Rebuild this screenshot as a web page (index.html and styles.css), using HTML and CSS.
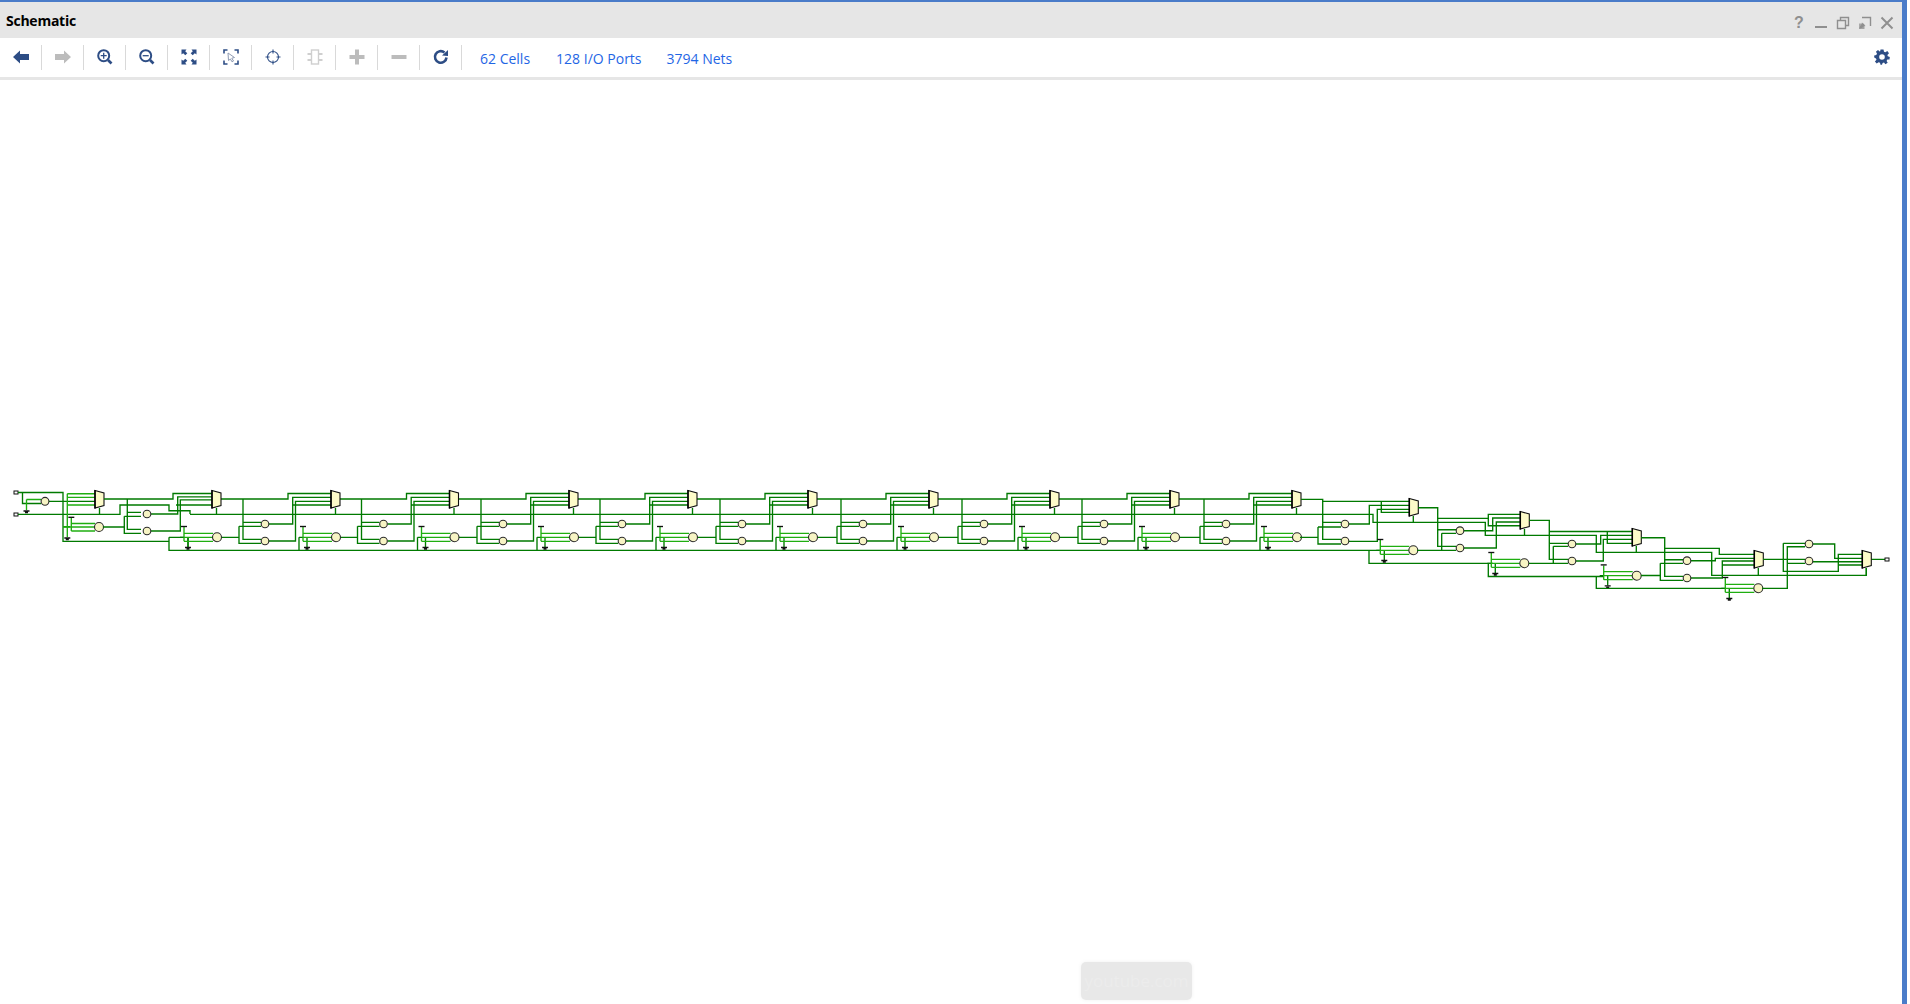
FILE: index.html
```html
<!DOCTYPE html>
<html lang="en">
<head>
<meta charset="utf-8">
<title>Schematic</title>
<link rel="stylesheet" href="styles.css">
</head>
<body>
<div class="frame">
  <header class="titlebar">
    <span class="title">Schematic</span>
    <div class="winctl">
      <span class="qmark">?</span>
      <svg class="wicon" viewBox="0 0 14 14"><path d="M1 11H13" class="ws"/></svg>
      <svg class="wicon" viewBox="0 0 14 14"><path d="M1.500 4.500H9.500V12.500H1.500ZM4.500 4V1.500H12.500V9.500H10" class="wt"/></svg>
      <svg class="wicon" viewBox="0 0 14 14"><path d="M4 1.500H12.500V10M1.500 12.500L6 8M2 7.500V12H6.500" class="wt"/><path d="M1 13L4 6.500L7.500 10Z" class="wf"/></svg>
      <svg class="wicon" viewBox="0 0 14 14"><path d="M1.500 1.500L12.500 12.500M12.500 1.500L1.500 12.500" class="ws"/></svg>
    </div>
  </header>
  <nav class="toolbar">
    <span class="tool"><svg viewBox="0 0 16 16"><path class="fd" d="M0 8L7 1.500V5H16V11H7V14.500Z"/></svg></span>
    <span class="tool"><svg viewBox="0 0 16 16"><path class="fg" d="M16 8L9 1.500V5H0V11H9V14.500Z"/></svg></span>
    <span class="tool"><svg viewBox="0 0 16 16"><circle class="sd" cx="6.700" cy="6.700" r="5.500"/><path class="sd1" d="M6.700 3.700V9.700M3.700 6.700H9.700"/><path class="sd3" d="M11 11L14.500 14.500"/></svg></span>
    <span class="tool"><svg viewBox="0 0 16 16"><circle class="sd" cx="6.700" cy="6.700" r="5.500"/><path class="sd1" d="M3.700 6.700H9.700"/><path class="sd3" d="M11 11L14.500 14.500"/></svg></span>
    <span class="tool"><svg viewBox="0 0 16 16"><path class="fd" d="M0.500 0.500H5.500L4.200 2.200L6.300 4.300L4.300 6.300L2.200 4.200L0.500 5.500ZM15.500 0.500V5.500L13.800 4.200L11.700 6.300L9.700 4.300L11.800 2.200L10.500 0.500ZM0.500 15.500V10.500L2.200 11.800L4.300 9.700L6.300 11.700L4.200 13.800L5.500 15.500ZM15.500 15.500H10.500L11.800 13.800L9.700 11.700L11.700 9.700L13.800 11.800L15.500 10.500Z"/></svg></span>
    <span class="tool"><svg viewBox="0 0 16 16"><path class="sd1b" d="M4.500 1H1V4.500M11.500 1H15V4.500M1 11.500V15H4.500M15 11.500V15H11.500"/><path class="cursor" d="M5 4L11.500 8.500L8.800 9.200L10.500 12L9 12.800L7.400 10L5.500 11.500Z"/></svg></span>
    <span class="tool"><svg viewBox="0 0 16 16"><circle class="sd1t" cx="8" cy="8" r="5.500"/><path class="sd1t" d="M8 0.500V4.500M8 11.500V15.500M0.500 8H4.500M11.500 8H15.500"/></svg></span>
    <span class="tool"><svg viewBox="0 0 16 16"><rect class="sgt" x="4.500" y="1" width="7" height="14"/><path class="sgb" d="M0.500 5H4M0.500 11H4M12 5H15.500M12 11H15.500"/></svg></span>
    <span class="tool"><svg viewBox="0 0 16 16"><path class="fg" d="M6 0.500H10V6H15.500V10H10V15.500H6V10H0.500V6H6Z"/></svg></span>
    <span class="tool"><svg viewBox="0 0 16 16"><path class="fg" d="M0.500 6H15.500V10H0.500Z"/></svg></span>
    <span class="tool"><svg viewBox="0 0 16 16"><path class="sd3" d="M13.500 8.500A5.800 5.800 0 1 1 11.500 3.500"/><path class="fd" d="M9 6.500L15 7V1Z"/></svg></span>
    <a class="stat stat-cells">62 Cells</a>
    <a class="stat stat-ports">128 I/O Ports</a>
    <a class="stat stat-nets">3794 Nets</a>
    <span class="gear"><svg viewBox="0 0 16 16"><path class="gearf" fill-rule="evenodd" d="M6.500 0.500H9.500L10 2.700L11.400 3.300L13.300 2.100L15 4.300L13.400 5.900L13.800 7.200L15.800 8L15.500 10.500L13.300 10.600L12.600 11.900L13.700 13.800L11.400 15.200L10 13.600L8.600 14L8 15.800H6.500L6 13.800L4.600 13.300L2.700 14.400L0.900 12.400L2.500 10.700L2 9.400L0.200 8.600V6.400L2.300 6L3 4.600L1.900 2.800L4 1.100L5.700 2.400L6.200 2.200ZM8 5.200A2.800 2.800 0 1 0 8 10.800A2.800 2.800 0 1 0 8 5.200Z"/></svg></span>
  </nav>
  <div class="rule"></div>
  <main class="canvas">
    <svg class="schem" viewBox="0 80 1902 924" width="1902" height="924">
      <defs>
        <g id="mux">
          <path class="muxb" d="M0 490.500L9 493V505.500L0 508Z"/>
          <path class="muxl" d="M0 490V508.500"/>
        </g>
        <path id="gnd" class="k" d="M-3 0H3M-1.500 1.500H1.500"/>
        <g id="head">
          <path class="w" d="M-114 499H-43V493.500H0M-88 499V539.300H-70M-88 522.300H-70M-114 537.300H-92M-92 526.300H-70M-92 526.300V543.300H-70"/>
          <path class="w" d="M-62 524H-38.300V497.300H0M-62 541H-35.500V501.300H0M-38.300 505H0M4.500 508V514M-32 550.300V537.300"/>
          <circle class="gate" cx="-66" cy="524" r="3.800"/>
          <circle class="gate" cx="-66" cy="541" r="3.800"/>
        </g>
        <g id="inv">
          <path class="w" d="M-32 537.300H-28M-24 537.300V547"/>
          <path class="l" d="M-28 527V541.300M-28 533.300H1M-28 537.300H1M-28 541.300H1"/>
          <path class="k" d="M-31 526.500H-25"/>
          <use href="#gnd" x="-24" y="547.500"/>
          <circle class="gate" cx="5" cy="537.300" r="4.500"/>
        </g>
      </defs>

      <!-- first cell -->
      <rect class="port" x="14" y="491" width="4" height="3"/>
      <rect class="port" x="14" y="513" width="4" height="3"/>
      <path class="w" d="M18 492.500H63V541.300H169M22.500 492.500V503.500H41M49 501.300H95M63 526.700H70M18 514.300H120V505H169V510.700H190V514M99.500 508V514.300"/>
      <path class="l" d="M26.500 499.500H41M26.500 499.500V510"/>
      <use href="#gnd" x="26.500" y="511"/>
      <circle class="gate" cx="45" cy="501.300" r="3.900"/>
      <path class="l" d="M67.300 493.700V537M67.300 493.700H95M67.300 497.300H95M67.300 505H95M71.300 518V531M71.300 523.500H95M63 527H95M71.300 531H95"/>
      <path class="k" d="M68.300 517.300H74.300"/>
      <use href="#gnd" x="67.300" y="538"/>
      <circle class="gate" cx="99" cy="527" r="4.500"/>
      <use href="#mux" x="95"/>

      <!-- second cell, fans out from the first mux -->
      <path class="w" d="M104 499H173V493.500H212M127.300 499V529.300H141M127.300 512.300H141M103 527H124.300M124.300 516.300H141M124.300 516.300V533.300H141"/>
      <path class="w" d="M151 514H177.700V496.800H212M151 531H180.300V499.800H212M176 505H212M216.500 508V514M169 537.300H184M188 537.300V547"/>
      <circle class="gate" cx="147" cy="514" r="3.800"/>
      <circle class="gate" cx="147" cy="531" r="3.800"/>

      <!-- carry rails -->
      <path class="w" d="M190 514.300H1373V522.300H1485.300V535.300H1596.300V552.300H1711.700V575.300H1866.300V568"/>
      <path class="w" d="M169 537.300V550.300H1381M1369 550.300V563.300H1488.300V576.500H1596.300V588.300H1726M1488.300 563.300H1493M1596.300 576.500H1604"/>

      <!-- repeated cells -->
      <use href="#head" x="331"/><use href="#head" x="449.500"/><use href="#head" x="569"/>
      <use href="#head" x="688"/><use href="#head" x="808"/><use href="#head" x="929"/>
      <use href="#head" x="1050"/><use href="#head" x="1170"/><use href="#head" x="1292"/>
      <use href="#inv" x="212"/><use href="#inv" x="331"/><use href="#inv" x="449.500"/>
      <use href="#inv" x="569"/><use href="#inv" x="688"/><use href="#inv" x="808"/>
      <use href="#inv" x="929"/><use href="#inv" x="1050"/><use href="#inv" x="1170"/><use href="#inv" x="1292"/>
      <use href="#mux" x="212"/><use href="#mux" x="331"/><use href="#mux" x="449.500"/>
      <use href="#mux" x="569"/><use href="#mux" x="688"/><use href="#mux" x="808"/>
      <use href="#mux" x="929"/><use href="#mux" x="1050"/><use href="#mux" x="1170"/><use href="#mux" x="1292"/>

      <!-- tapering tail, cell 11 -->
      <path class="w" d="M1301 499.300H1322.700V501.300H1409M1322.700 499.300V539.300H1341M1322.700 522.300H1341M1300 537.300H1318M1318 527V544H1341M1318 527H1341"/>
      <path class="w" d="M1349 524H1369.300V505.300H1409M1349 541.300H1377.300V509.300H1409M1381.300 501.300V512.300H1409M1413.300 516V522.300"/>
      <circle class="gate" cx="1345" cy="524" r="3.800"/><circle class="gate" cx="1345" cy="541" r="3.800"/>
      <use href="#inv" transform="translate(1408.300 13)"/>
      <use href="#mux" transform="translate(1409.300 8)"/>

      <!-- cell 12 -->
      <path class="w" d="M1418 507.700H1437.700V546.300H1456M1437.700 529.700H1456M1437.700 518.300H1488.300V514.300H1520M1488.300 514.300V525.700H1520M1417 550.300H1456M1441.700 533.300V550.300M1441.700 533.300H1456"/>
      <path class="w" d="M1464 530.700H1492.700V518H1520M1464 548H1496.300V522H1520M1524.500 529V535.300"/>
      <circle class="gate" cx="1460" cy="530.700" r="3.800"/><circle class="gate" cx="1460" cy="548" r="3.800"/>
      <use href="#inv" transform="translate(1519.300 26)"/>
      <use href="#mux" transform="translate(1520.300 21)"/>

      <!-- cell 13 -->
      <path class="w" d="M1529 520.300H1549.300V559.300H1568M1549.300 543.300H1568M1549.300 531.500H1632M1529 563.300H1568M1553.300 546.300V563.300M1553.300 546.300H1568"/>
      <path class="w" d="M1576 544H1600.700V535.300H1632M1576 561H1603.300V539.300H1632M1607.300 531.500V543.300H1632M1636.300 546V552.300"/>
      <circle class="gate" cx="1572" cy="544" r="3.800"/><circle class="gate" cx="1572" cy="561" r="3.800"/>
      <use href="#inv" transform="translate(1631.700 38.400)"/>
      <use href="#mux" transform="translate(1632.300 38)"/>

      <!-- cell 14 -->
      <path class="w" d="M1641 537.700H1664.700V576.300H1683M1664.700 559.700H1683M1664.700 548.300H1719.300V554.300H1754M1641 575.500H1660.300M1660.300 563.300V580.300H1683M1660.300 563.300H1683"/>
      <path class="w" d="M1691 560.700H1715.300V558.300H1754M1691 578H1722.300V561H1754M1722.300 565H1754M1758.300 568V575.300"/>
      <circle class="gate" cx="1687" cy="560.700" r="3.800"/><circle class="gate" cx="1687" cy="578" r="3.800"/>
      <use href="#inv" transform="translate(1753.300 51)"/>
      <use href="#mux" transform="translate(1754.300 60)"/>

      <!-- cell 15 -->
      <path class="w" d="M1763 559.300H1805M1783.300 543.300V571.300H1838.300V554.300H1862M1783.300 543.300H1805M1762 588.300H1787.300V546.700H1805M1787.300 563.300H1805"/>
      <path class="w" d="M1813 544H1834.700V558.300H1862M1813 561.700H1862M1838.300 565H1862M1866.300 568V575.300M1871 559.300H1885"/>
      <circle class="gate" cx="1809" cy="544" r="3.800"/><circle class="gate" cx="1809" cy="561" r="3.800"/>
      <use href="#mux" transform="translate(1862.300 60)"/>
      <rect class="port" x="1885" y="558" width="4" height="3"/>
    </svg>
    <div class="toast">youtube.com</div>
  </main>
</div>
</body>
</html>
```
FILE: styles.css
```css
html, body {
  margin: 0;
  padding: 0;
  height: 100%;
  background: #fff;
  overflow: hidden;
}

.frame {
  box-sizing: border-box;
  width: 1907px;
  height: 1004px;
  border-top: 2px solid #4a7cc9;
  border-right: 5px solid #4a7cc9;
  display: flex;
  flex-direction: column;
  font-family: "Open Sans", "Noto Sans", sans-serif;
}

.titlebar {
  height: 36px;
  flex: none;
  background: #e6e6e6;
  display: flex;
  align-items: center;
  justify-content: space-between;
  padding: 0 8px 0 6px;
}

.title {
  font-size: 14px;
  font-weight: 700;
  color: #000;
  letter-spacing: -0.25px;
}

.winctl {
  display: flex;
  align-items: center;
  gap: 8px;
  padding-top: 6px;
}

.qmark {
  width: 14px;
  text-align: center;
  font: 700 16px "Liberation Sans", sans-serif;
  color: #8f8f8f;
  line-height: 14px;
}

.wicon {
  width: 14px;
  height: 14px;
  display: block;
}

.ws, .wt { fill: none; stroke: #8f8f8f; }
.ws { stroke-width: 2; }
.wt { stroke-width: 1.4; }
.wf { fill: #8f8f8f; }

.toolbar {
  height: 39px;
  flex: none;
  background: #fff;
  display: flex;
  align-items: center;
}

.tool {
  box-sizing: border-box;
  width: 42px;
  height: 25px;
  margin-top: -1px;
  border-right: 1px solid #d9d9d9;
  display: flex;
  align-items: center;
  justify-content: center;
}

.tool svg {
  width: 16px;
  height: 16px;
  display: block;
  overflow: visible;
}

.fd { fill: #2d4d85; }
.fg { fill: #bcbcbc; }
.sd { fill: none; stroke: #2d4d85; stroke-width: 2; }
.sd1 { fill: none; stroke: #2d4d85; stroke-width: 1.3; }
.sd1b { fill: none; stroke: #2d4d85; stroke-width: 1.6; }
.sd1t { fill: none; stroke: #2d4d85; stroke-width: 1.1; }
.sd3 { fill: none; stroke: #2d4d85; stroke-width: 2.6; }
.cursor { fill: #fff; stroke: #8f9bb3; stroke-width: 1; }
.sgt { fill: none; stroke: #cfcfcf; stroke-width: 1.4; }
.sgb { fill: none; stroke: #cfcfcf; stroke-width: 2; }

.stat {
  font-size: 14px;
  color: #1f66e5;
  white-space: nowrap;
  padding-top: 2px;
}

.stat-cells { margin-left: 18px; }
.stat-ports { margin-left: 26px; }
.stat-nets { margin-left: 25px; }

.gear {
  margin-left: auto;
  margin-right: 12px;
  width: 16px;
  height: 16px;
  margin-top: -1px;
}

.gear svg {
  display: block;
  width: 16px;
  height: 16px;
}

.gearf { fill: #2d4d85; }

.rule {
  height: 3px;
  flex: none;
  background: #e6e6e6;
}

.canvas {
  flex: 1;
  position: relative;
  overflow: hidden;
}

.schem {
  display: block;
}

.w, .l, .k {
  fill: none;
  stroke-width: 1.35;
}

.w { stroke: #007a00; }
.l { stroke: #1fae10; }
.k { stroke: #111; }

.gate {
  fill: #f7f4c4;
  stroke: #2a2a2a;
  stroke-width: 1.1;
}

.muxb {
  fill: #fdfbc9;
  stroke: #111;
  stroke-width: 1.1;
}

.muxl {
  fill: none;
  stroke: #000;
  stroke-width: 1.5;
}

.port {
  fill: #fff;
  stroke: #111;
  stroke-width: 1;
}

.toast {
  position: absolute;
  left: 1081px;
  top: 882px;
  width: 111px;
  height: 38px;
  border-radius: 5px;
  background: #e8e8e8;
  box-shadow: 0 0 4px rgba(0, 0, 0, 0.06);
  color: #ececec;
  font-size: 17px;
  text-align: center;
  line-height: 38px;
}
```
